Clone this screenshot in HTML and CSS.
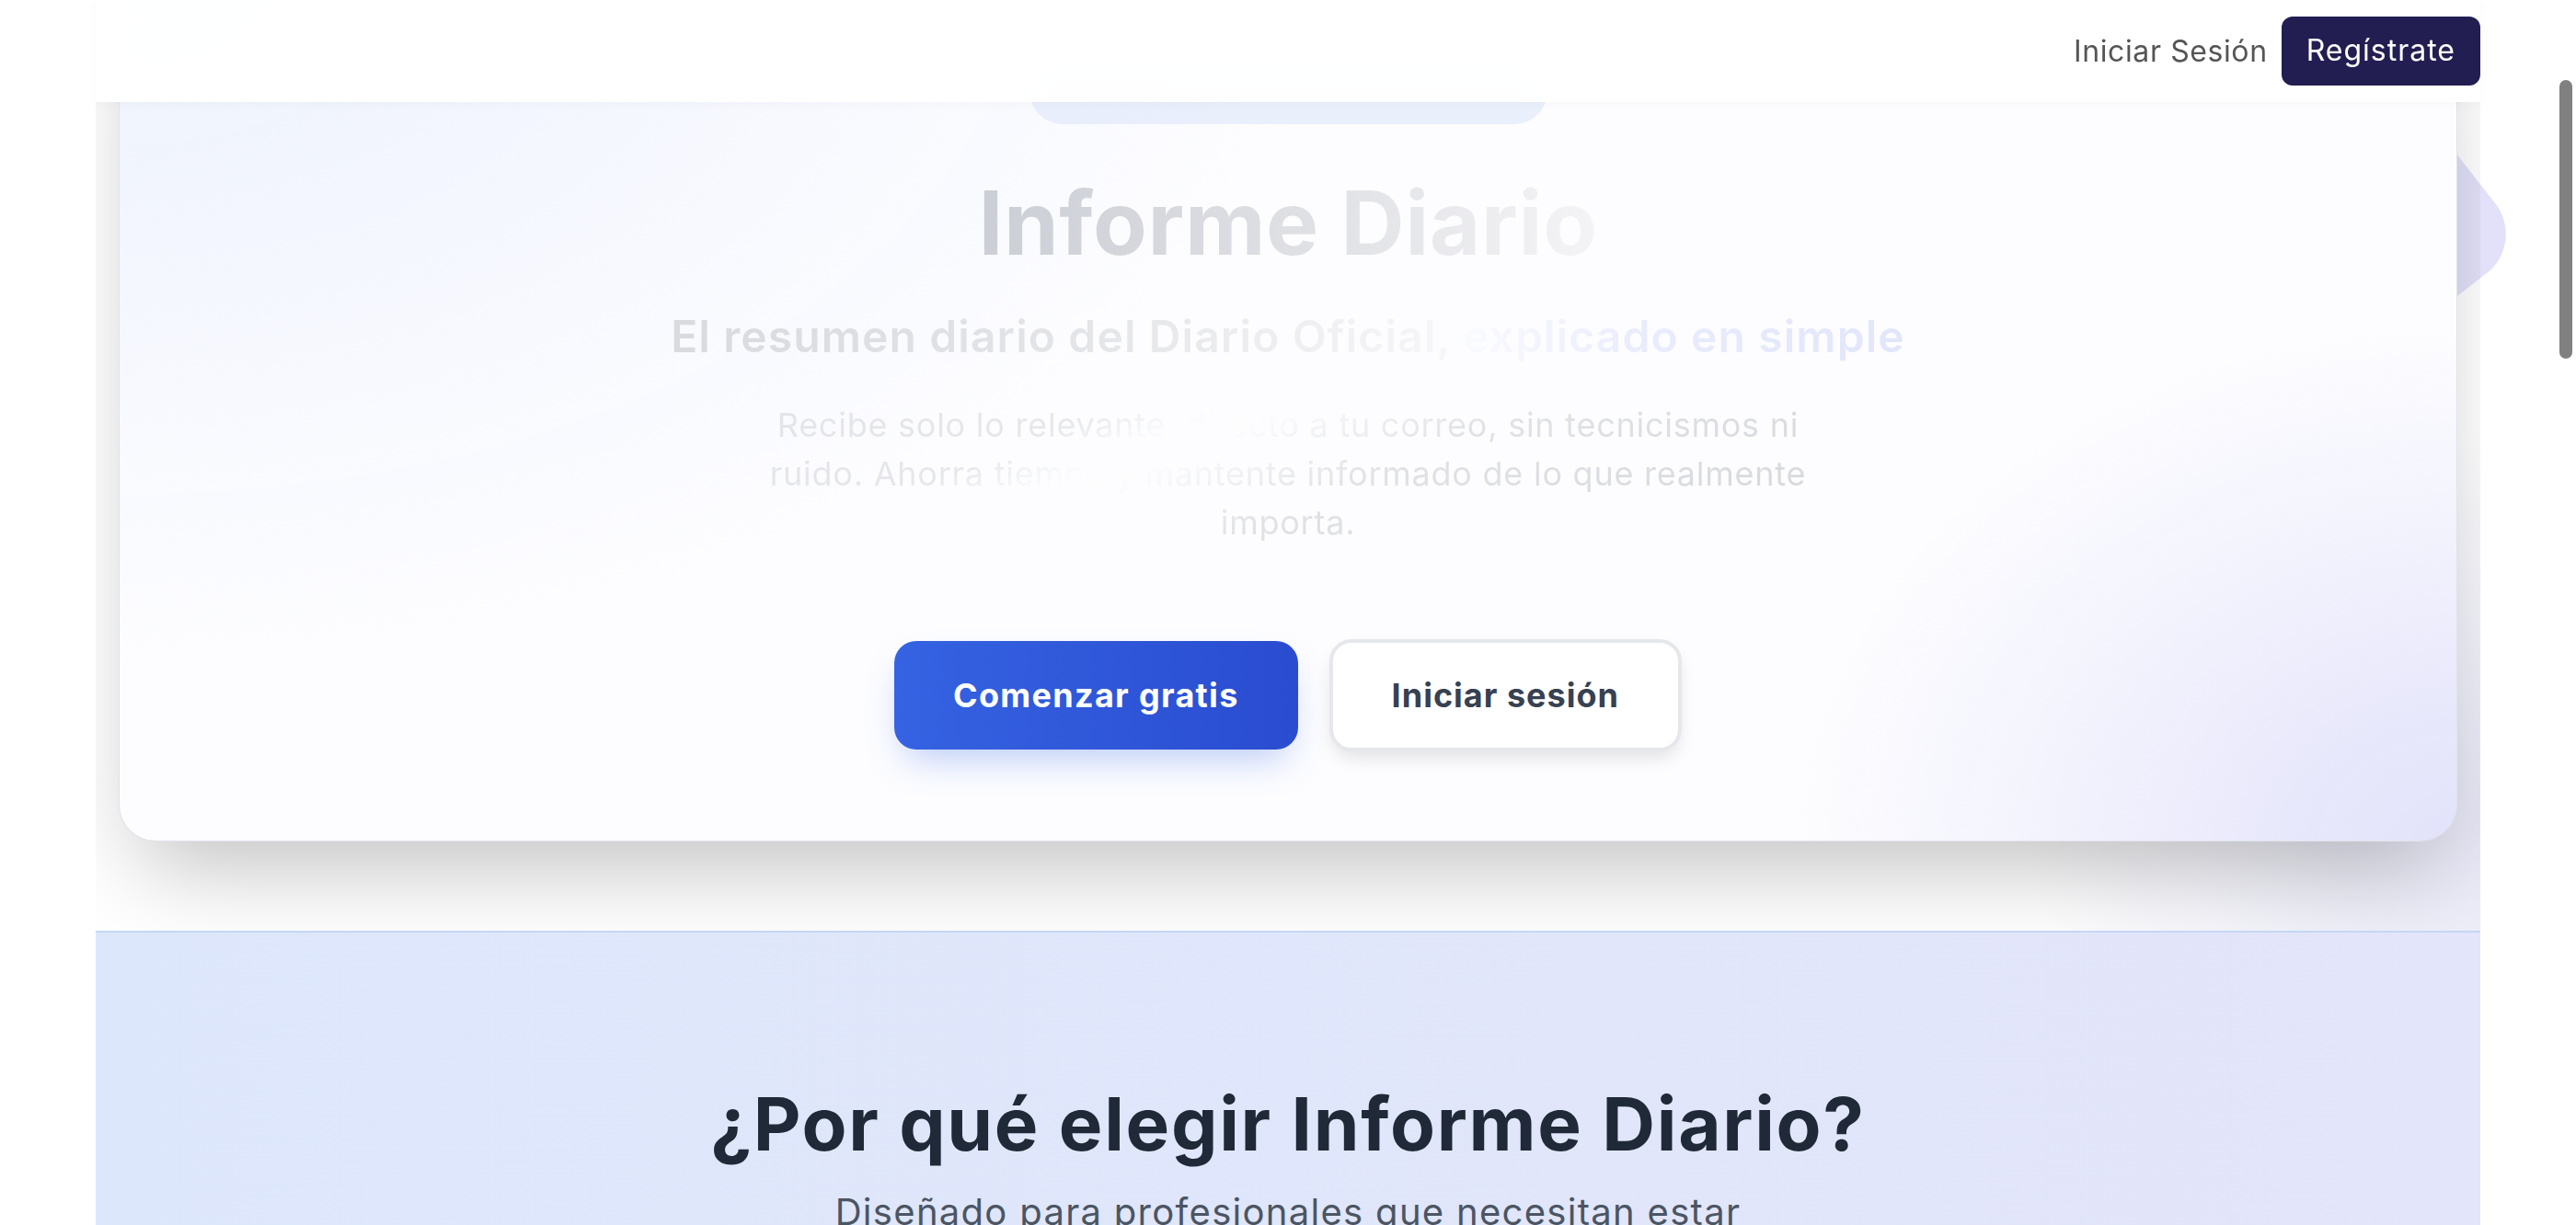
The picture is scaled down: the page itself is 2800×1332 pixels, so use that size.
FILE: index.html
```html
<!DOCTYPE html>
<html lang="es">
<head>
<meta charset="utf-8">
<title>Informe Diario</title>
<link rel="stylesheet" href="styles.css">
</head>
<body>
<div class="scrollbar"></div>
<header class="topbar">
  <div class="topbar-inner">
    <a class="login-link" href="#">Iniciar Sesión</a>
    <a class="signup-btn" href="#">Regístrate</a>
  </div>
</header>
<main class="page">
  <div class="blob-diamond"></div>
  <section class="hero">
    <div class="hero-card">
      <div class="pill"></div>
      <h1 class="hero-title">Informe Diario</h1>
      <h2 class="hero-sub"><span class="sub-a">El resumen diario del Diario Oficial, </span><span class="sub-b">explicado en simple</span></h2>
      <p class="hero-text">Recibe solo lo relevante, directo a tu correo, sin tecnicismos ni<br>ruido. Ahorra tiempo y mantente informado de lo que realmente<br>importa.</p>
      <div class="hero-actions">
        <a class="btn btn-primary" href="#">Comenzar gratis</a>
        <a class="btn btn-outline" href="#">Iniciar sesión</a>
      </div>
    </div>
  </section>
  <section class="features">
    <h2 class="features-title">¿Por qué elegir Informe Diario?</h2>
    <p class="features-sub">Diseñado para profesionales que necesitan estar</p>
  </section>
</main>
</body>
</html>
```
FILE: styles.css
```css
* { box-sizing: border-box; margin: 0; padding: 0; }
html, body { height: 1332px; overflow: hidden; background: #ffffff; }
body { font-family: Inter, "Noto Sans", sans-serif; color: #1f2937; }
a { text-decoration: none; }

.scrollbar {
  position: fixed; right: 4px; top: 87px; width: 14px; height: 303px;
  background: #808080; border-radius: 7px; z-index: 100;
}

.topbar { position: fixed; top: 0; left: 0; right: 0; z-index: 50; }
.topbar-inner {
  width: 2592px; height: 111px; margin: 0 auto;
  display: flex; align-items: center; justify-content: flex-end; gap: 15px;
  background: rgba(255, 255, 255, 0.94);
  backdrop-filter: blur(16px);
  box-shadow: 0 2px 12px rgba(0, 0, 0, 0.03);
}
.login-link { font-size: 32px; line-height: 48px; color: #555555; letter-spacing: 0.6px; }
.signup-btn {
  font-size: 32px; line-height: 48px; padding: 13px 27px 14px; letter-spacing: 1px;
  background: #221e52; color: #ffffff; border-radius: 12px;
}

.page { width: 2592px; margin: 0 auto; position: relative; }
.blob-diamond {
  position: absolute; left: 2281px; top: 88px; width: 300px; height: 300px;
  border-radius: 54px; background: #e2e1f9; transform: rotate(52deg);
}

.hero {
  position: relative; overflow: hidden; padding: 0 25px 97px;
  background: radial-gradient(ellipse 500px 420px at 100% 88%, rgba(214, 214, 240, 0.6), rgba(214, 214, 240, 0) 100%);
}
.hero-card {
  margin-top: -34px; padding: 96px 48px 97px;
  border-radius: 40px; border: 1px solid rgba(222, 224, 232, 0.9);
  background:
    radial-gradient(ellipse 720px 560px at 100% 100%, rgba(224, 224, 250, 0.95), rgba(224, 224, 250, 0) 100%),
    radial-gradient(ellipse 1300px 760px at 0% 0%, #edf2fd, rgba(237, 242, 253, 0) 100%),
    #fdfdff;
  box-shadow: 0 50px 100px -24px rgba(0, 0, 0, 0.25);
  display: flex; flex-direction: column; align-items: center; text-align: center;
}
.pill { width: 563px; height: 72px; border-radius: 36px; background: rgba(219, 228, 250, 0.55); }

.hero-title {
  margin-top: 50px; font-size: 96px; line-height: 115px; font-weight: 700; letter-spacing: 0.6px;
  background: linear-gradient(90deg, #cbced5 0%, #e0e1e5 55%, #f4f4f6 100%);
  -webkit-background-clip: text; background-clip: text; color: transparent;
}
.hero-sub { margin-top: 34px; font-size: 48px; line-height: 64px; font-weight: 600; letter-spacing: 1.1px; }
.sub-a {
  background: linear-gradient(90deg, #d8dade 0%, #e3e4e8 50%, #f7f7f9 100%);
  -webkit-background-clip: text; background-clip: text; color: transparent;
}
.sub-b {
  background: linear-gradient(90deg, #fafbfe 0%, #e9ecfc 40%, #e2e6fb 100%);
  -webkit-background-clip: text; background-clip: text; color: transparent;
}
.hero-text {
  margin-top: 38px; font-size: 36px; line-height: 53px; font-weight: 400; letter-spacing: 0.75px;
  background: linear-gradient(156deg, #e3e4e8 0%, #e6e7ea 25%, #fafbfd 34%, #fefefe 38%, #f3f4f6 44%, #e1e2e6 56%, #d7d9de 90%);
  -webkit-background-clip: text; background-clip: text; color: transparent;
}

.hero-actions { margin-top: 100px; display: flex; align-items: center; gap: 34px; }
.btn {
  display: block; font-size: 36px; font-weight: 700; border-radius: 24px; padding: 0 64px; letter-spacing: 1.3px;
}
.btn-primary {
  height: 118px; line-height: 118px; color: #ffffff;
  background: linear-gradient(90deg, #3563e2, #2a4cd0);
  box-shadow: 0 20px 40px -12px rgba(53, 99, 226, 0.35);
}
.btn-outline {
  height: 122px; line-height: 114px; color: #374151; background: #ffffff;
  border: 4px solid #e5e7eb; letter-spacing: 1px;
  box-shadow: 0 10px 20px -4px rgba(0, 0, 0, 0.12);
}

.features {
  border-top: 2px solid #c4d7f6;
  background: linear-gradient(90deg, #dde7fb, #e3e5fa);
  padding: 160px 0 200px; text-align: center;
}
.features-title { font-size: 80px; line-height: 96px; font-weight: 700; color: #1f2937; letter-spacing: 1.7px; }
.features-sub { margin-top: 20px; font-size: 40px; line-height: 56px; color: #4b5563; letter-spacing: 1.3px; }
```
